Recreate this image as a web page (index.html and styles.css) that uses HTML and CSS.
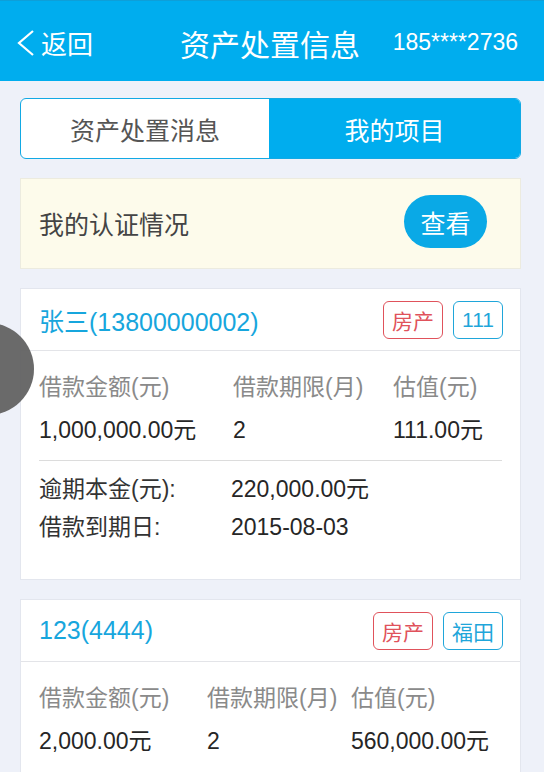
FILE: index.html
```html
<!DOCTYPE html>
<html lang="zh-CN">
<head>
<meta charset="utf-8">
<title>资产处置信息</title>
<link rel="stylesheet" href="styles.css">
</head>
<body>
<header class="topbar">
  <a class="back">
    <svg class="chev" width="20" height="26" viewBox="0 0 20 26"><path d="M17 1 L3 13 L17 25" fill="none" stroke="#fff" stroke-width="2.2" stroke-linejoin="miter"/></svg>
    <span>返回</span>
  </a>
  <h1 class="title">资产处置信息</h1>
  <span class="phone">185****2736</span>
</header>

<main class="content">
  <nav class="tabs">
    <div class="tab">资产处置消息</div>
    <div class="tab active">我的项目</div>
  </nav>

  <section class="cert">
    <span class="cert-text">我的认证情况</span>
    <button class="btn-view">查看</button>
  </section>

  <section class="card">
    <div class="card-head">
      <span class="card-title">张三(13800000002)</span>
      <div class="badges">
        <span class="badge red">房产</span>
        <span class="badge blue">111</span>
      </div>
    </div>
    <div class="card-body">
      <div class="stats cols-a">
        <span class="lbl">借款金额(元)</span>
        <span class="lbl">借款期限(月)</span>
        <span class="lbl">估值(元)</span>
        <span class="val">1,000,000.00元</span>
        <span class="val">2</span>
        <span class="val">111.00元</span>
      </div>
      <div class="extra">
        <span class="ex-lbl">逾期本金(元):</span>
        <span class="ex-val">220,000.00元</span>
        <span class="ex-lbl">借款到期日:</span>
        <span class="ex-val">2015-08-03</span>
      </div>
    </div>
  </section>

  <section class="card">
    <div class="card-head">
      <span class="card-title">123(4444)</span>
      <div class="badges">
        <span class="badge red">房产</span>
        <span class="badge blue">福田</span>
      </div>
    </div>
    <div class="card-body">
      <div class="stats cols-b">
        <span class="lbl">借款金额(元)</span>
        <span class="lbl">借款期限(月)</span>
        <span class="lbl">估值(元)</span>
        <span class="val">2,000.00元</span>
        <span class="val">2</span>
        <span class="val">560,000.00元</span>
      </div>
    </div>
  </section>
</main>

<div class="assist"></div>
</body>
</html>
```

FILE: styles.css
```css
* { box-sizing: border-box; }
html, body { margin: 0; padding: 0; }
body {
  width: 544px;
  height: 772px;
  overflow: hidden;
  background: #eef1f9;
  font-family: "Liberation Sans", "Noto Sans CJK SC", sans-serif;
  position: relative;
}

.topbar {
  height: 81px;
  background: #00adee;
  border-top: 1px solid #0e9fd8;
  display: flex;
  align-items: center;
  padding: 3px 26px 0 16px;
  color: #fff;
}
.back {
  display: flex;
  align-items: center;
  gap: 5px;
  font-size: 26px;
  width: 150px;
}
.chev { display: block; }
.title {
  flex: 1;
  margin: 0;
  font-size: 30px;
  font-weight: 400;
  text-align: center;
  padding-right: 16px;
}
.phone {
  font-size: 23px;
  width: 128px;
  text-align: right;
}

.content {
  padding: 17px 23px 0 20px;
  display: flex;
  flex-direction: column;
  gap: 19px;
}

.tabs {
  display: flex;
  height: 61px;
  border: 1.5px solid #12a9e4;
  border-radius: 6px;
  overflow: hidden;
  background: #fff;
}
.tab {
  flex: 1;
  display: flex;
  align-items: center;
  justify-content: center;
  font-size: 25px;
  color: #555;
}
.tab:first-child { flex: 0 0 248px; }
.tab.active {
  background: #00adee;
  color: #fff;
}

.cert {
  height: 91px;
  background: #fdfbeb;
  border: 1px solid #ecebdf;
  display: flex;
  align-items: center;
  justify-content: space-between;
  padding: 0 33px 2px 18px;
}
.cert-text { font-size: 25px; color: #444; }
.btn-view {
  width: 83px;
  height: 53px;
  border: none;
  border-radius: 27px;
  background: #0aa9e6;
  color: #fff;
  font-family: inherit;
  font-size: 25px;
  padding: 0;
  margin-top: -2px;
}

.card {
  background: #fff;
  border: 1px solid #e3e6ee;
}
.card-head {
  height: 62px;
  border-bottom: 1px solid #e3e4e8;
  display: flex;
  align-items: center;
  justify-content: space-between;
  padding: 0 17px 0 18px;
}
.card-title { font-size: 25px; color: #17a6dd; }
.badges { display: flex; gap: 10px; }
.badge {
  height: 38px;
  min-width: 50px;
  padding: 0 8px;
  border: 1.5px solid;
  border-radius: 6px;
  display: flex;
  align-items: center;
  justify-content: center;
  font-size: 21px;
}
.badge.red { color: #e0525b; border-color: #e0525b; }
.badge.blue { color: #1fa6da; border-color: #1fa6da; }

.card-body { padding: 15px 18px 33px; }
.stats {
  display: grid;
  grid-auto-rows: 43px;
  font-size: 23px;
}
.stats span, .extra span {
  display: block;
  line-height: 43px;
  height: 43px;
  white-space: nowrap;
}
.cols-a { grid-template-columns: 194px 160px 1fr; }
.cols-b { grid-template-columns: 168px 144px 1fr; }
.lbl { color: #8a8a8a; }
.val { color: #262626; }

.extra {
  margin-top: 8px;
  border-top: 1px solid #dcdcdc;
  padding-top: 9px;
  display: grid;
  grid-template-columns: 192px 1fr;
  grid-auto-rows: 38px;
  font-size: 23px;
  color: #262626;
}
.extra span { line-height: 38px; height: 38px; }
.ex-lbl { color: #333; }

.assist {
  position: absolute;
  left: -58px;
  top: 323px;
  width: 92px;
  height: 92px;
  border-radius: 50%;
  background: rgba(98, 98, 98, 0.95);
}
```
